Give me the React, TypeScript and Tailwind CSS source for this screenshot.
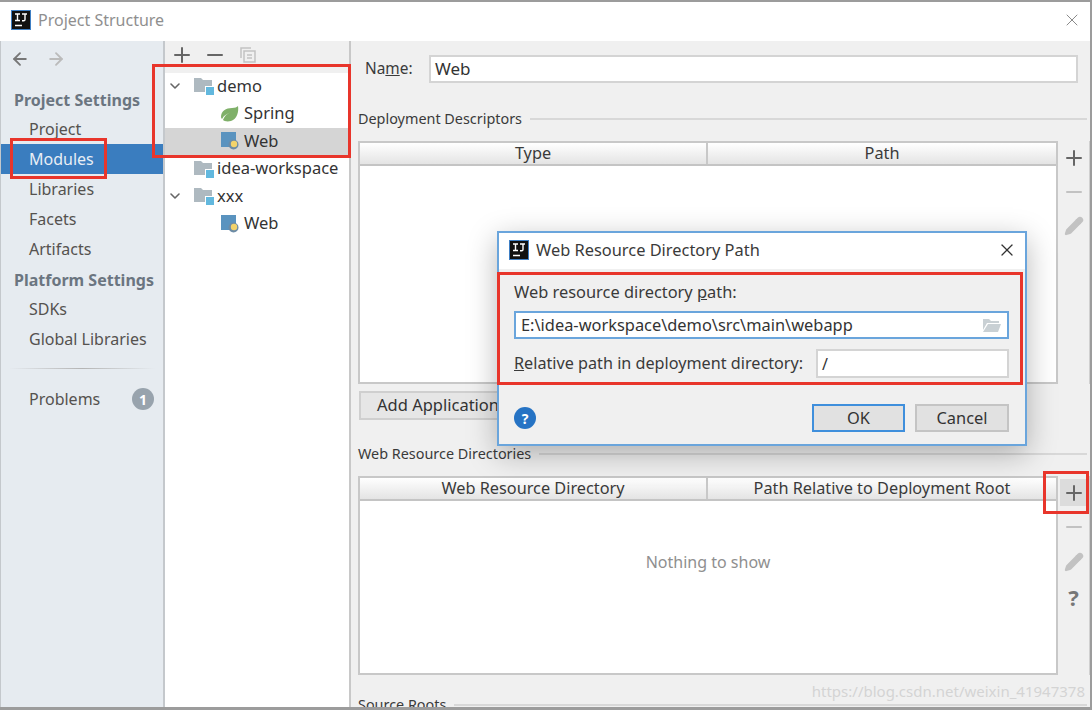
import { ArrowLeft, ArrowRight, Plus, Minus, X, ChevronDown, Pencil } from 'lucide-react';

const LogoIJ = ({ size }: { size: number }) => (
    <svg width={size} height={size} viewBox="0 0 20 20" className="shrink-0">
        <rect x="0.5" y="0.5" width="19" height="19" fill="#111" stroke="#3f7fc4" />
        <path d="M4 4h5M6.5 4v6.5M4 10.5h5M11 4h5M14 4v5.5q0 1.2-1.3 1.2H11M4 15.5h7" stroke="#fff" strokeWidth="1.4" fill="none" />
    </svg>
);

const ModuleFolder = () => (
    <svg width="20" height="20" viewBox="0 0 20 20" className="shrink-0">
        <path d="M0 2h7l2 2h9v12H0z" fill="#aeb9c0" />
        <rect x="11" y="10" width="9" height="9" fill="#fff" />
        <rect x="12" y="11" width="8" height="8" fill="#62b8de" />
    </svg>
);

const SpringLeaf = () => (
    <svg width="20" height="20" viewBox="0 0 20 20" className="shrink-0 mr-[1px]">
        <path d="M1 13C1 7 6 4 12 4c3 0 5-1 6-2 1 6-1 13-7 15-4 1-7 0-8-1C5 11 8 9 12 8 8 9 4 11 2 15c-.7-.6-1-1.200-1-2z" fill="#7fb069" />
    </svg>
);

const WebIcon = () => (
    <svg width="18" height="18" viewBox="0 0 18 18" className="shrink-0 mr-[2px]">
        <rect x="0" y="0" width="15" height="15" fill="#5a93bf" />
        <circle cx="12.500" cy="12.500" r="5" fill="#6c8ba6" />
        <circle cx="13" cy="12" r="3.200" fill="#f3d36b" />
    </svg>
);

const TreeRow = ({ label, indent, icon, open, selected }: { label: string; indent: string; icon: React.ReactNode; open?: boolean; selected?: boolean }) => (
    <div className={`flex items-center h-[27.5px] ${indent} ${selected ? 'bg-[#d5d5d5]' : ''}`}>
        {open && <ChevronDown className="w-4 h-4 mr-[11px] text-[#666]" strokeWidth={2.400} />}
        {icon}
        <span className="ml-[3px] text-[16.500px] text-[#333]">{label}</span>
    </div>
);

const SideItem = ({ label, active }: { label: string; active?: boolean }) => (
    <div className={`h-[30px] pl-[28px] flex items-center text-[16px] ${active ? 'bg-[#3a7dbf] text-[#e8eef5]' : 'text-[#55524f]'}`}>
        {label}
    </div>
);

const SideHeading = ({ label }: { label: string }) => (
    <div className="h-[30px] pl-[13px] pt-[2px] flex items-center text-[16px] font-bold text-[#6b7580]">{label}</div>
);

const TableHead = ({ cols, first }: { cols: string[]; first: string }) => (
    <div className="flex h-[23px] border-b-2 border-[#c4c4c4] bg-gradient-to-b from-white to-[#e4e4e4] shrink-0">
        {cols.map((col, i) => (
            <div key={col} className={`flex items-center justify-center text-[16.300px] text-[#3a3a3a] ${i === 0 ? `${first} border-r-2 border-[#c8c8c8]` : 'flex-1'}`}>
                {col}
            </div>
        ))}
    </div>
);

const SectionTitle = ({ label }: { label: string }) => (
    <div className="flex items-center gap-2 pr-[3px]">
        <span className="text-[14.400px] text-[#3a3a3a] leading-[20px]">{label}</span>
        <div className="flex-1 h-[2px] bg-[#d8d8d8]"></div>
    </div>
);

const App = () => {
    return (
        <div className="relative flex flex-col w-[1092px] h-[710px] overflow-hidden bg-white border-t-2 border-r-2 border-b-[3px] border-[#9c9c9c] font-['Noto_Sans',sans-serif]">
            {/* Title bar */}
            <div className="flex items-center h-[39px] pl-[11px] pr-[8px] pb-[3px] shrink-0">
                <LogoIJ size={20} />
                <span className="ml-[7px] text-[16px] text-[#8f8f8f]">Project Structure</span>
                <X className="w-5 h-5 ml-auto text-[#8a8a8a]" strokeWidth={1.2} />
            </div>

            <div className="flex flex-1 min-h-0">
                {/* Sidebar */}
                <div className="flex flex-col w-[165px] shrink-0 bg-[#e6ebf0] border-r-2 border-l border-[#c4c8cc]">
                    <div className="flex items-center gap-[16px] h-[36px] pl-[9px]">
                        <ArrowLeft className="w-5 h-5 text-[#777]" strokeWidth={2.200} />
                        <ArrowRight className="w-5 h-5 text-[#bbb]" strokeWidth={2.200} />
                    </div>
                    <div className="mt-[7px]">
                        <SideHeading label="Project Settings" />
                        <SideItem label="Project" />
                        <SideItem label="Modules" active />
                        <SideItem label="Libraries" />
                        <SideItem label="Facets" />
                        <SideItem label="Artifacts" />
                        <SideHeading label="Platform Settings" />
                        <SideItem label="SDKs" />
                        <SideItem label="Global Libraries" />
                    </div>
                    <div className="h-[1px] mx-[8px] mt-[14px] mb-[15px] bg-gradient-to-r from-transparent via-[#b4b4b4] to-transparent"></div>
                    <div className="flex items-center h-[30px] pl-[28px] pr-[9px] text-[16px] text-[#55524f]">
                        Problems
                        <span className="flex items-center justify-center ml-auto w-[22px] h-[22px] text-[14px] font-bold text-white rounded-full bg-[#98a3ad]">1</span>
                    </div>
                </div>

                {/* Module tree */}
                <div className="flex flex-col w-[186px] shrink-0 bg-white border-r-2 border-[#c8c8c8]">
                    <div className="flex items-center gap-[9px] h-[31.500px] pl-[5px] pb-[3px] bg-[#f0f0f0]">
                        <Plus className="w-6 h-6 text-[#666]" strokeWidth={2} />
                        <Minus className="w-6 h-6 text-[#666]" strokeWidth={2} />
                        <svg width="18" height="18" viewBox="0 0 18 18" fill="none" stroke="#c2c2c2" strokeWidth="1.500" className="ml-[3px]">
                            <path d="M2 12V2h10" />
                            <rect x="5" y="5" width="11" height="11" />
                            <path d="M8 9h5M8 12h5" />
                        </svg>
                    </div>
                    <TreeRow label="demo" indent="pl-[2px]" icon={<ModuleFolder />} open />
                    <TreeRow label="Spring" indent="pl-[55px]" icon={<SpringLeaf />} />
                    <TreeRow label="Web" indent="pl-[56px]" icon={<WebIcon />} selected />
                    <TreeRow label="idea-workspace" indent="pl-[29px]" icon={<ModuleFolder />} />
                    <TreeRow label="xxx" indent="pl-[2px]" icon={<ModuleFolder />} open />
                    <TreeRow label="Web" indent="pl-[56px]" icon={<WebIcon />} />
                </div>

                {/* Web facet panel */}
                <div className="flex flex-col flex-1 min-w-0 pl-[7px] bg-[#f0f0f0]">
                    <div className="flex items-center h-[28px] mt-[14px] pr-[12px]">
                        <span className="ml-[7px] w-[64px] text-[15.400px] text-[#3a3a3a]">Na<span className="underline">m</span>e:</span>
                        <div className="flex items-center flex-1 h-full px-[4px] text-[17px] bg-white border-2 border-[#d4d4d4] text-[#333]">Web</div>
                    </div>
                    <div className="mt-[26px]">
                        <SectionTitle label="Deployment Descriptors" />
                    </div>
                    <div className="flex mt-[12px] h-[243px] shrink-0">
                        <div className="flex flex-col w-[700px] bg-white border-2 border-[#c8c8c8]">
                            <TableHead cols={['Type', 'Path']} first="w-[348px]" />
                        </div>
                        <div className="flex flex-col items-center flex-1 pt-[5px] border-r border-[#d0d0d0]">
                            <Plus className="w-6 h-6 text-[#666]" strokeWidth={2} />
                            <Minus className="w-6 h-6 mt-[10px] text-[#c2c2c2]" strokeWidth={2} />
                            <Pencil className="w-5 h-5 mt-[12px] text-[#c2c2c2] fill-[#c2c2c2]" />
                        </div>
                    </div>
                    <div className="flex items-center w-[360px] h-[29px] mt-[7px] ml-[1px] pl-[16px] text-[16.500px] whitespace-nowrap bg-[#e6e6e6] border-2 border-[#cfcfcf] text-[#333] shrink-0">
                        Add Application Server specific descriptor...
                    </div>
                    <div className="mt-[24px]">
                        <SectionTitle label="Web Resource Directories" />
                    </div>
                    <div className="flex mt-[12px] h-[199px] shrink-0">
                        <div className="flex flex-col w-[700px] bg-white border-2 border-[#c8c8c8]">
                            <TableHead cols={['Web Resource Directory', 'Path Relative to Deployment Root']} first="w-[348px]" />
                            <div className="flex items-center justify-center flex-1 pb-[50px] text-[16px] text-[#8f8f8f]">Nothing to show</div>
                        </div>
                        <div className="flex flex-col items-center flex-1 pt-[3px] border-r border-[#d0d0d0]">
                            <div className="flex items-center justify-center w-[27px] h-[27px] bg-[#dcdcdc]">
                                <Plus className="w-6 h-6 text-[#666]" strokeWidth={2} />
                            </div>
                            <Minus className="w-6 h-6 mt-[9px] text-[#c2c2c2]" strokeWidth={2} />
                            <Pencil className="w-5 h-5 mt-[13px] text-[#c2c2c2] fill-[#c2c2c2]" />
                            <span className="mt-[13px] text-[22px] leading-[24px] font-bold text-[#777]">?</span>
                        </div>
                    </div>
                    <div className="mt-[20px]">
                        <SectionTitle label="Source Roots" />
                    </div>
                </div>
            </div>

            {/* Dialog */}
            <div className="absolute left-[497px] top-[229px] flex flex-col w-[530px] h-[215px] bg-[#f0f0f0] border-2 border-[#6aa5dc] shadow-[0_8px_28px_rgba(0,0,0,0.28)]">
                <div className="flex items-center h-[36px] pl-[10px] pr-[8px] pb-[2px] bg-white shrink-0">
                    <LogoIJ size={20} />
                    <span className="ml-[7px] text-[16.400px] text-[#3a3a3a]">Web Resource Directory Path</span>
                    <X className="w-[20px] h-[20px] ml-auto text-[#333]" strokeWidth={1.500} />
                </div>
                <div className="flex flex-col pl-[15px] pr-[16px]">
                    <div className="mt-[12px] text-[16.400px] leading-[22px] text-[#3a3a3a]">Web resource directory <span className="underline">p</span>ath:</div>
                    <div className="flex items-center justify-between h-[28px] mt-[8px] pl-[5px] pr-[5px] text-[16.400px] bg-white border-2 border-[#6aa5dc] text-[#333]">
                        E:\idea-workspace\demo\src\main\webapp
                        <svg width="20" height="16" viewBox="0 0 20 16" fill="#c9d0d4">
                            <path d="M1 2h6l2 2h8v2H5L1 13z" />
                            <path d="M6 7h13l-3 8H1z" />
                        </svg>
                    </div>
                    <div className="flex items-center justify-between h-[29px] mt-[10px]">
                        <span className="text-[16.200px] whitespace-nowrap text-[#3a3a3a]"><span className="underline">R</span>elative path in deployment directory:</span>
                        <div className="flex items-center w-[193px] h-full px-[4px] text-[16px] bg-white border-2 border-[#d4d4d4] text-[#333]">/</div>
                    </div>
                    <div className="flex items-center mt-[26px]">
                        <span className="flex items-center justify-center w-[22px] h-[22px] text-[14px] font-bold text-white rounded-full bg-[#2673c4]">?</span>
                        <div className="flex items-center justify-center w-[93px] h-[28px] ml-auto text-[16.400px] bg-[#e1e1e1] border-2 border-[#3f8fdc] text-[#333]">OK</div>
                        <div className="flex items-center justify-center w-[94px] h-[28px] ml-[10px] text-[16.400px] bg-[#e1e1e1] border-2 border-[#c4c4c4] text-[#333]">Cancel</div>
                    </div>
                </div>
            </div>

            {/* Red annotation boxes */}
            <div className="absolute left-[10px] top-[136px] w-[97px] h-[41px] border-[3px] border-[#e8352b]"></div>
            <div className="absolute left-[152px] top-[62px] w-[199px] h-[94px] border-[3px] border-[#e8352b]"></div>
            <div className="absolute left-[497px] top-[270px] w-[526px] h-[113px] border-[3px] border-[#e8352b]"></div>
            <div className="absolute left-[1043px] top-[469px] w-[46px] h-[43px] border-[3px] border-[#e8352b]"></div>

            {/* Watermark */}
            <div className="absolute right-[5px] top-[678px] text-[15px] text-[#d4d4d4]">https://blog.csdn.net/weixin_41947378</div>
        </div>
    );
};

export default App;
